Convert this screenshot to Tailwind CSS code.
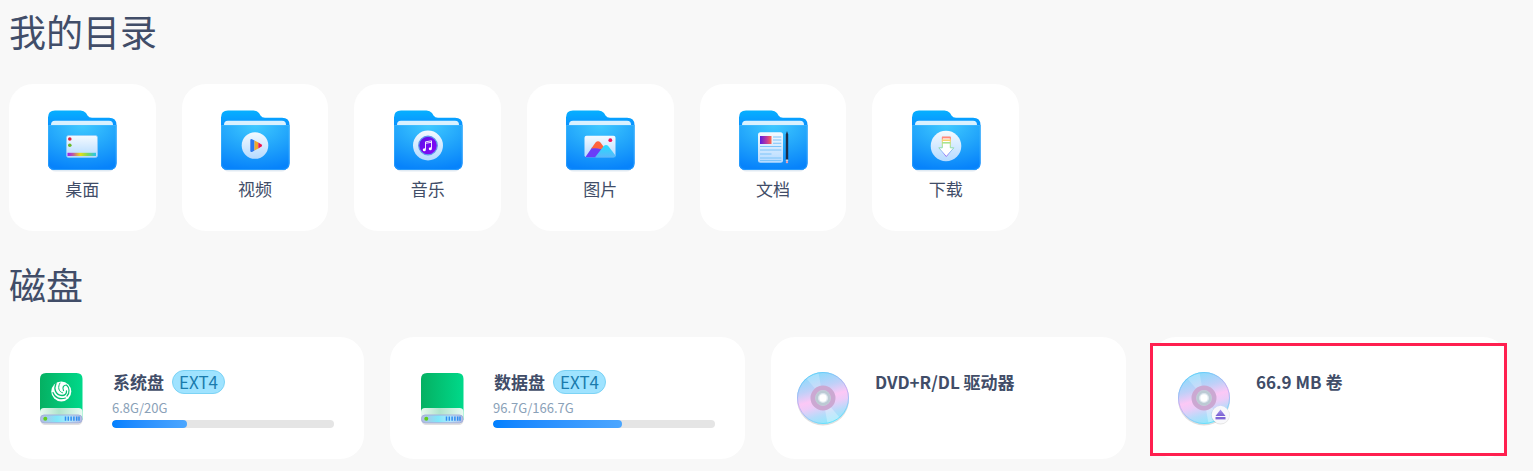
<!DOCTYPE html>
<html lang="zh-CN">
<head>
    <meta charset="UTF-8">
    <meta name="viewport" content="width=device-width, initial-scale=1.0">
    <title>计算机</title>
    <script src="https://cdn.jsdelivr.net/npm/@tailwindcss/browser@4"></script>
</head>
<body class="bg-[#f8f8f8] text-[#414d68] font-['Noto_Sans_CJK_SC',sans-serif]">
    <!-- shared icon parts -->
    <svg width="0" height="0" class="absolute" aria-hidden="true">
        <defs>
            <linearGradient id="back" x1="0" y1="0" x2="0" y2="1">
                <stop offset="0" stop-color="#06b0ff"/>
                <stop offset=".3" stop-color="#0a8cff"/>
                <stop offset="1" stop-color="#0a84ff"/>
            </linearGradient>
            <radialGradient id="front" cx=".5" cy="0" r="1">
                <stop offset="0" stop-color="#3fcaff"/>
                <stop offset=".55" stop-color="#20a3fb"/>
                <stop offset="1" stop-color="#0783fb"/>
            </radialGradient>
            <linearGradient id="sheet" x1="0" y1="0" x2="0" y2="1">
                <stop offset="0" stop-color="#f4faff"/>
                <stop offset="1" stop-color="#b4daff"/>
            </linearGradient>
            <linearGradient id="rainbow">
                <stop offset="0" stop-color="#9a1ff0"/>
                <stop offset=".2" stop-color="#c05aa0"/>
                <stop offset=".45" stop-color="#e6e014"/>
                <stop offset=".7" stop-color="#7fd85c"/>
                <stop offset="1" stop-color="#22c4f4"/>
            </linearGradient>
            <linearGradient id="purple" x1="0" y1="0" x2="1" y2="1">
                <stop offset="0" stop-color="#5a10e8"/>
                <stop offset="1" stop-color="#8a08f8"/>
            </linearGradient>
            <linearGradient id="photo">
                <stop offset="0" stop-color="#5a1ce0"/>
                <stop offset=".6" stop-color="#c23a9a"/>
                <stop offset="1" stop-color="#ff6a4a"/>
            </linearGradient>
            <linearGradient id="peak" x1="0" y1="0" x2="0" y2="1">
                <stop offset="0" stop-color="#23dcff"/>
                <stop offset="1" stop-color="#5ab8fa"/>
            </linearGradient>
            <linearGradient id="arrowEdge" x1="0" y1="0" x2="0" y2="1">
                <stop offset="0" stop-color="#ff7a70"/>
                <stop offset=".25" stop-color="#f0d860"/>
                <stop offset=".5" stop-color="#8ee09a"/>
                <stop offset=".75" stop-color="#8fb8ff"/>
                <stop offset="1" stop-color="#9a6cf0"/>
            </linearGradient>
            <linearGradient id="green">
                <stop offset="0" stop-color="#05b062"/>
                <stop offset="1" stop-color="#00d98a"/>
            </linearGradient>
            <linearGradient id="glass">
                <stop offset="0" stop-color="#e8f8f0"/>
                <stop offset=".45" stop-color="#b0e4cc"/>
                <stop offset="1" stop-color="#e8faf2"/>
            </linearGradient>
            <linearGradient id="base">
                <stop offset="0" stop-color="#b8bce0"/>
                <stop offset=".4" stop-color="#7fe8fa"/>
                <stop offset=".7" stop-color="#b4e8fc"/>
                <stop offset="1" stop-color="#b4b8e4"/>
            </linearGradient>
            <linearGradient id="disc" x1=".35" y1="0" x2=".65" y2="1">
                <stop offset="0" stop-color="#86dcfc"/>
                <stop offset=".3" stop-color="#bfd0f8"/>
                <stop offset=".5" stop-color="#fcc8f6"/>
                <stop offset=".62" stop-color="#ecccf8"/>
                <stop offset=".8" stop-color="#b4dcfa"/>
                <stop offset="1" stop-color="#8aeafc"/>
            </linearGradient>
            <linearGradient id="discEdge" x1=".3" y1="0" x2=".7" y2="1">
                <stop offset="0" stop-color="#5cd0fa"/>
                <stop offset=".5" stop-color="#cdaef0"/>
                <stop offset="1" stop-color="#5ce4fc"/>
            </linearGradient>
            <linearGradient id="eject" x1="0" y1="0" x2="0" y2="1">
                <stop offset="0" stop-color="#a89af0"/>
                <stop offset="1" stop-color="#7a5fd0"/>
            </linearGradient>
        </defs>
        <symbol id="folder" viewBox="0 0 70 64">
            <rect x="2" y="50" width="66" height="12.6" rx="7" fill="#1a5fa0" opacity=".13"/>
            <path d="M1 54V8.5Q1 1.500 8 1.500H33.500Q37 1.500 39 4L40.500 6.500Q42 8.800 45 8.800H62Q69.500 8.800 69.500 16V54Q69.500 61 62.500 61H7.500Q1 61 1 54Z" fill="url(#back)"/>
            <path d="M4 17V16Q4 11.800 8 11.800H62Q66 11.800 66 16V17Z" fill="#d9f1ff"/>
            <path d="M1 16H69.500V54Q69.500 61 62.500 61H7.500Q1 61 1 54Z" fill="url(#front)"/>
            <path d="M1.500 16.500H69V54Q69 60.500 62.500 60.500H7.500Q1.500 60.500 1.500 54Z" fill="none" stroke="#5cc4ff" stroke-opacity=".35"/>
        </symbol>
        <symbol id="drive" viewBox="0 0 56 56">
            <rect x="7.500" y="44" width="42" height="11" rx="4.500" fill="#000" opacity=".12"/>
            <path d="M7 50V9Q7 3 13 3H43.500Q49.500 3 49.500 9V50Z" fill="url(#green)"/>
            <path d="M7 50V42Q7 38 11 38H45.500Q49.500 38 49.500 42V50Z" fill="url(#glass)"/>
            <rect x="7.500" y="45" width="41.500" height="7.800" rx="3.500" fill="url(#base)" stroke="#a4b0dc"/>
            <circle cx="12.300" cy="48.800" r="2" fill="#5fce1c"/>
            <path d="M32.500 46.500V50.800M35.300 46.500V50.800M38.100 46.500V50.800M40.900 46.500V50.800M43.700 46.500V50.800M46 46.500V50.800" stroke="#2f8ff0" stroke-width="1.500"/>
        </symbol>
        <symbol id="dvd" viewBox="0 0 56 56">
            <circle cx="28" cy="29.500" r="26" fill="#000" opacity=".13"/>
            <circle cx="28" cy="28" r="26" fill="url(#disc)"/>
            <path d="M28 28L11 8A26 26 0 0 1 23.500 2.400Z" fill="#fff" opacity=".22"/>
            <path d="M28 28L45 48A26 26 0 0 1 32.500 53.600Z" fill="#fff" opacity=".3"/>
            <circle cx="28" cy="28" r="25.500" fill="none" stroke="url(#discEdge)"/>
            <circle cx="28" cy="28" r="10.200" fill="#c9cfdc" stroke="#cba8d2" stroke-width="4.600"/>
            <circle cx="28" cy="28" r="6.300" fill="#dde6ee" stroke="#bccad4" stroke-width="2.400"/>
            <circle cx="28" cy="28" r="3.700" fill="#fff"/>
        </symbol>
    </svg>

    <main class="pl-[9px] pr-[26px]">
        <section class="pt-1">
            <h1 class="text-[37px] leading-[54px] mb-[26px]">我的目录</h1>
            <div class="grid grid-cols-6 gap-[26px] max-w-[1010px]">
                <a href="#" class="flex flex-col items-center gap-1 bg-white rounded-3xl pt-[25px] pb-[30px]">
                    <svg class="w-[70px] h-16" viewBox="0 0 70 64" aria-hidden="true">
                        <use href="#folder"/>
                        <rect x="19.500" y="26.500" width="31" height="22" rx="2" fill="url(#sheet)" stroke="#8fcaf8" stroke-width=".7"/>
                        <circle cx="22.800" cy="30" r="1.800" fill="#e0213c"/>
                        <circle cx="22.800" cy="36.200" r="1.800" fill="#6cba28"/>
                        <rect x="20.500" y="43.800" width="28.500" height="3.200" fill="url(#rainbow)"/>
                    </svg>
                    <span class="text-[17px] leading-6">桌面</span>
                </a>
                <a href="#" class="flex flex-col items-center gap-1 bg-white rounded-3xl pt-[25px] pb-[30px]">
                    <svg class="w-[70px] h-16" viewBox="0 0 70 64" aria-hidden="true">
                        <use href="#folder"/>
                        <circle cx="35" cy="36.500" r="13.300" fill="url(#sheet)"/>
                        <path d="M30.300 31.300Q30.300 29.700 32 30.200L34.500 31.400V41.600L32 43Q30.300 43.500 30.300 41.800Z" fill="#2b78f0"/>
                        <path d="M34.500 31.400L38.300 33.400V39.600L34.500 41.600Z" fill="#f0a828"/>
                        <path d="M38.300 33.400L41.500 35.600Q42.800 36.500 41.500 37.400L38.300 39.600Z" fill="#f01450"/>
                    </svg>
                    <span class="text-[17px] leading-6">视频</span>
                </a>
                <a href="#" class="flex flex-col items-center gap-1 bg-white rounded-3xl pt-[25px] pb-[30px]">
                    <svg class="w-[70px] h-16" viewBox="0 0 70 64" aria-hidden="true">
                        <use href="#folder"/>
                        <circle cx="35" cy="36.500" r="15" fill="url(#sheet)"/>
                        <circle cx="35" cy="36.500" r="9.300" fill="url(#purple)" stroke="#5e98ea" stroke-width="1.200"/>
                        <path d="M32.500 40.500V32.800L38.500 31.800V39.500M32.500 34.300L38.500 33.300" fill="none" stroke="#fff" stroke-width=".9"/>
                        <circle cx="31.300" cy="40.800" r="1.500" fill="#fff"/>
                        <circle cx="37.300" cy="39.700" r="1.500" fill="#fff"/>
                    </svg>
                    <span class="text-[17px] leading-6">音乐</span>
                </a>
                <a href="#" class="flex flex-col items-center gap-1 bg-white rounded-3xl pt-[25px] pb-[30px]">
                    <svg class="w-[70px] h-16" viewBox="0 0 70 64" aria-hidden="true">
                        <use href="#folder"/>
                        <rect x="19.500" y="26.800" width="31" height="21.500" rx="2" fill="url(#sheet)"/>
                        <path d="M20.300 48.300L27 38.500L37.500 39.500L31 48.300Z" fill="#6a3cf8"/>
                        <path d="M26.300 39.500L30.500 33.600Q33 31 35.500 33.600L38.800 38L37 40.500Q31.500 38.500 26.300 39.500Z" fill="#ff643c"/>
                        <path d="M30 48.300L39 36.800Q41 35 43 36.800L50.300 46.300V48.300Z" fill="url(#peak)"/>
                        <circle cx="45.300" cy="31.200" r="1.900" fill="#f0145c"/>
                    </svg>
                    <span class="text-[17px] leading-6">图片</span>
                </a>
                <a href="#" class="flex flex-col items-center gap-1 bg-white rounded-3xl pt-[25px] pb-[30px]">
                    <svg class="w-[70px] h-16" viewBox="0 0 70 64" aria-hidden="true">
                        <use href="#folder"/>
                        <rect x="20" y="23.300" width="25" height="30.500" rx="2.500" fill="url(#sheet)"/>
                        <rect x="22" y="27" width="11.500" height="8" fill="url(#photo)"/>
                        <path d="M35 28H43.300M35 31H43.300M35 34.300H43.300M22 37.500H43.300M22 41H43.300M22 45H33.500M22 49H43.300M22 51.500H43.300" stroke="#7cc4fa" stroke-width="1.100"/>
                        <path d="M47.800 25.500L49 22L50.200 25.500V51H47.800Z" fill="#1c2c48"/>
                        <rect x="47.800" y="50.500" width="2.400" height="1.500" fill="#c8d4e0"/>
                        <rect x="47.800" y="52" width="2.400" height="2.300" rx="1" fill="#ec9cb4"/>
                    </svg>
                    <span class="text-[17px] leading-6">文档</span>
                </a>
                <a href="#" class="flex flex-col items-center gap-1 bg-white rounded-3xl pt-[25px] pb-[30px]">
                    <svg class="w-[70px] h-16" viewBox="0 0 70 64" aria-hidden="true">
                        <use href="#folder"/>
                        <circle cx="35" cy="37" r="15.300" fill="url(#sheet)"/>
                        <path d="M31.300 28.300H39.300V38.800H42.800L35.300 47.500L27.800 38.800H31.300Z" fill="#fff" stroke="url(#arrowEdge)" stroke-width="1" stroke-linejoin="round"/>
                        <path d="M31 28.500H39.600" stroke="#ff8a7c" stroke-width="1.800"/>
                        <path d="M31 31.200H39.600" stroke="#f8d070" stroke-width="1.600"/>
                        <path d="M31 33.800H39.600" stroke="#a8e490" stroke-width="1.600"/>
                    </svg>
                    <span class="text-[17px] leading-6">下载</span>
                </a>
            </div>
        </section>

        <section class="pt-[26px] pb-3">
            <h2 class="text-[37px] leading-[54px] mb-[26px]">磁盘</h2>
            <div class="grid grid-cols-4 gap-[26px]">
                <a href="#" class="flex items-start gap-[23px] bg-white rounded-3xl pt-[33px] pb-[31px] pl-6 pr-[30px]">
                    <svg class="w-14 h-14 shrink-0" viewBox="0 0 56 56" aria-hidden="true">
                        <use href="#drive"/>
                        <circle cx="28.300" cy="21.500" r="10" fill="#fff"/>
                        <g fill="none" stroke="#08c074" stroke-linecap="round">
                            <path d="M23 13.500C20.500 19 22.500 25 29 25.500C32 25.500 33.800 23.500 33.500 21" stroke-width="1.300"/>
                            <path d="M27 13C24.500 17 25.500 21.800 29.500 22.800" stroke-width="1"/>
                            <path d="M30.500 20.500C29 17.500 30.500 15 33.500 15C36.500 17.500 37 23 34 26" stroke-width="1.200"/>
                            <path d="M20 22.500C21.500 27.500 27 30 32.500 28" stroke-width="1.200"/>
                        </g>
                    </svg>
                    <div class="flex-1 min-w-0">
                        <div class="flex items-center gap-2 h-6 pl-px">
                            <span class="text-[17px] leading-6 font-bold">系统盘</span>
                            <span class="h-6 px-1.5 rounded-xl border border-[#7cd3f5] bg-[#9fe3ff] text-[#1a7bad] text-[17px] leading-[22px]">EXT4</span>
                        </div>
                        <p class="text-[13px] leading-5 pt-1 mb-[2px] text-[#8aa1b8]">6.8G/20G</p>
                        <div class="h-2 rounded-full bg-[#e5e5e5] overflow-hidden" role="progressbar" aria-label="系统盘" aria-valuenow="34" aria-valuemin="0" aria-valuemax="100">
                            <div class="h-full rounded-full bg-linear-to-r from-[#0080ff] to-[#4ba6ff]" style="width: 34%"></div>
                        </div>
                    </div>
                </a>
                <a href="#" class="flex items-start gap-[23px] bg-white rounded-3xl pt-[33px] pb-[31px] pl-6 pr-[30px]">
                    <svg class="w-14 h-14 shrink-0" viewBox="0 0 56 56" aria-hidden="true">
                        <use href="#drive"/>
                    </svg>
                    <div class="flex-1 min-w-0">
                        <div class="flex items-center gap-2 h-6 pl-px">
                            <span class="text-[17px] leading-6 font-bold">数据盘</span>
                            <span class="h-6 px-1.5 rounded-xl border border-[#7cd3f5] bg-[#9fe3ff] text-[#1a7bad] text-[17px] leading-[22px]">EXT4</span>
                        </div>
                        <p class="text-[13px] leading-5 pt-1 mb-[2px] text-[#8aa1b8]">96.7G/166.7G</p>
                        <div class="h-2 rounded-full bg-[#e5e5e5] overflow-hidden" role="progressbar" aria-label="数据盘" aria-valuenow="58" aria-valuemin="0" aria-valuemax="100">
                            <div class="h-full rounded-full bg-linear-to-r from-[#0080ff] to-[#4ba6ff]" style="width: 58%"></div>
                        </div>
                    </div>
                </a>
                <a href="#" class="flex items-start gap-[23px] bg-white rounded-3xl pt-[33px] pb-[31px] pl-6 pr-[30px]">
                    <svg class="w-14 h-14 shrink-0" viewBox="0 0 56 56" aria-hidden="true">
                        <use href="#dvd"/>
                    </svg>
                    <span class="pl-px text-[17px] leading-6 font-bold">DVD+R/DL 驱动器</span>
                </a>
                <a href="#" class="relative flex items-start gap-[23px] bg-white rounded-3xl pt-[33px] pb-[31px] pl-6 pr-[30px]">
                    <!-- highlight frame -->
                    <span class="absolute -left-[2px] right-0 top-[6px] bottom-[3px] bg-white border-3 border-[#ff1f4f]"></span>
                    <svg class="relative w-14 h-14 shrink-0" viewBox="0 0 56 56" aria-hidden="true">
                        <use href="#dvd"/>
                        <circle cx="44.500" cy="45.200" r="9.300" fill="#000" opacity=".1"/>
                        <circle cx="44.500" cy="44.700" r="8.900" fill="#f8f8fb"/>
                        <path d="M44.500 39.500L49.500 46H39.500Z" fill="url(#eject)"/>
                        <rect x="39.500" y="47" width="10" height="2.400" fill="#7f66d6"/>
                    </svg>
                    <span class="relative pl-px text-[17px] leading-6 font-bold">66.9 MB 卷</span>
                </a>
            </div>
        </section>
    </main>
</body>
</html>
